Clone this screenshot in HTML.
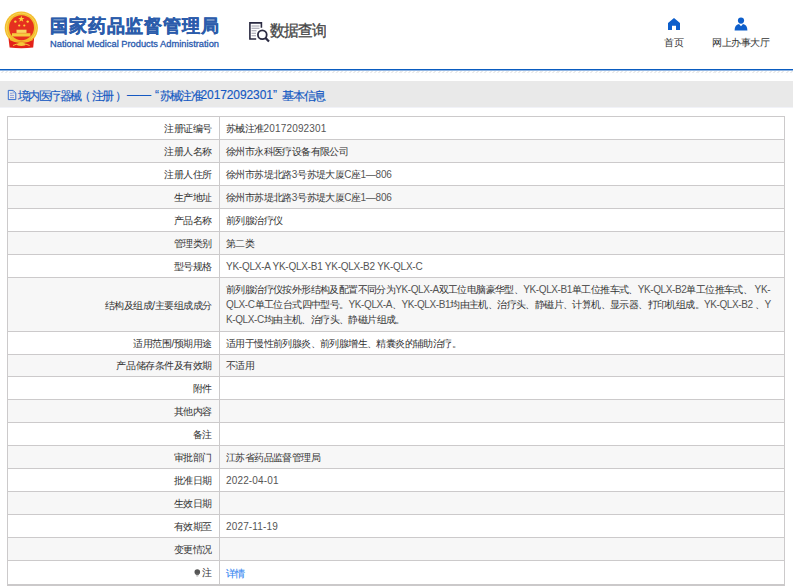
<!DOCTYPE html>
<html><head><meta charset="utf-8">
<style>
*{margin:0;padding:0;box-sizing:border-box}
html,body{width:793px;height:587px;overflow:hidden;background:#fff;font-family:"Liberation Sans",sans-serif}
.a{position:absolute;white-space:nowrap}
.t1{left:50px;top:14px;font-size:18px;font-weight:bold;-webkit-text-stroke:0.35px #2b5cab;color:#2b5cab;line-height:24px;letter-spacing:0.85px}
.t2{left:50px;top:38px;font-size:9.3px;color:#2a5aae;-webkit-text-stroke:0.3px #2a5aae;line-height:12px}
.sqt{left:270px;top:19px;font-size:15px;color:#474747;-webkit-text-stroke:0.3px #474747;line-height:22px;letter-spacing:-1.1px;transform:scaleY(1.08);transform-origin:0 0}
.nav{top:37px;font-size:10px;color:#333;line-height:12px;letter-spacing:-0.45px}
.line{left:0;top:69px;width:793px;height:1px;background:#0a5cc0}
.line2{left:0;top:70px;width:793px;height:1px;background:#8fb4e2}
.hatch{left:0;top:71px;width:793px;height:2px;background:repeating-linear-gradient(135deg,#fff 0,#fff 1.5px,#ececec 1.5px,#ececec 3px)}
.bar{left:0;top:81px;width:793px;height:26px;background:#e9e9e9}
.crumb{top:89px;font-size:12px;color:#1559c2;-webkit-text-stroke:0.15px #1559c2;line-height:14px}
.row{position:absolute;left:7px;width:778px;border-top:1px solid #cccacb;border-left:1px solid #cccacb;border-right:1px solid #cccacb}
.row.g{background:#f7f7f7}
.div{position:absolute;left:219px;top:116px;width:1px;height:469px;background:#cccacb}
.bot{position:absolute;left:7px;top:584px;width:778px;height:2px;background:#cbc9ca}
.k,.v{position:absolute;font-size:10px;color:#333;line-height:12px;white-space:nowrap}
.k{left:0;width:212px;text-align:right;letter-spacing:-0.45px}
.v{left:226px;font-size:10px;letter-spacing:-0.25px;color:#555}
.c{font-size:10px;letter-spacing:-0.6px;color:#333}
.dg{letter-spacing:0.15px}
.vc{font-size:10px;letter-spacing:-0.6px;color:#333}
a{color:#3888f2;-webkit-text-stroke:0.15px #3888f2;text-decoration:none}
</style></head><body>
<svg class="a" style="left:0;top:0" width="45" height="55" viewBox="0 0 45 55">
  <circle cx="21.3" cy="28" r="16.6" fill="#f3bd2c"/>
  <circle cx="21.3" cy="28" r="15" fill="none" stroke="#f8d45a" stroke-width="1"/>
  <circle cx="21.5" cy="27.7" r="12.5" fill="#e5301f"/>
  <path d="M21.3 15.8l0.8 2.3h2.4l-1.95 1.45 0.75 2.3-2-1.45-2 1.45 0.75-2.3-1.95-1.45h2.4z" fill="#ffd23a"/>
  <circle cx="15.3" cy="21.6" r="1.2" fill="#ffd23a"/>
  <circle cx="27.7" cy="21.6" r="1.2" fill="#ffd23a"/>
  <circle cx="19.2" cy="25.5" r="1.1" fill="#ffd23a"/>
  <circle cx="24.3" cy="25.5" r="1.1" fill="#ffd23a"/>
  <path d="M16.5 29.7h10v3.2h-10z" fill="#f9d660"/>
  <path d="M12 33.2h18.4v3.3h-18.4z" fill="#f6cc3e"/>
  <path d="M8.5 38.2 Q21.3 45 34.1 38.2 L33.2 47.6 Q21.3 49 9.6 47.6 Z" fill="#e32219"/>
  <path d="M10 39.2 Q21.3 45.5 32.6 39.2" fill="none" stroke="#f3bd2c" stroke-width="1.8"/>
  <ellipse cx="21.3" cy="44.3" rx="4.5" ry="1.6" fill="#f6c83a"/>
  <path d="M13 45.5 L17 44 M29.6 45.5 L25.6 44" stroke="#f6c83a" stroke-width="1"/>
</svg>
<div class="a t1">国家药品监督管理局</div>
<div class="a t2">National Medical Products Administration</div>
<svg class="a" style="left:247px;top:20px" width="24" height="24" viewBox="0 0 24 24">
  <path d="M14.4 7.8V2.9H2.9V19H9.2" fill="none" stroke="#2b2b42" stroke-width="1.6"/>
  <path d="M4.5 6h8M4.5 8.2h8M4.5 10.8h5M4.5 13.2h4.5M4.5 15.8h4.5" stroke="#9d9daa" stroke-width="1.1"/>
  <circle cx="15.3" cy="14.7" r="4.4" fill="none" stroke="#2b2b42" stroke-width="1.8"/>
  <path d="M18.4 17.9l3.6 3.6" stroke="#2b2b42" stroke-width="2.2"/>
</svg>
<div class="a sqt">数据查询</div>
<svg class="a" style="left:667px;top:17px" width="14" height="14" viewBox="0 0 14 14">
  <path d="M1 6 L7 1 L13 6 V13 H9 V8.7 H5 V13 H1 Z" fill="#0d5ecb"/>
</svg>
<div class="a nav" style="left:664px">首页</div>
<svg class="a" style="left:734px;top:17px" width="14" height="14" viewBox="0 0 14 14">
  <circle cx="7" cy="3.6" r="3.1" fill="#0d5ecb"/>
  <path d="M0.6 13.5 Q0.6 7.8 5 7 L7 9.2 L9 7 Q13.4 7.8 13.4 13.5 Z" fill="#0d5ecb"/>
</svg>
<div class="a nav" style="left:712px">网上办事大厅</div>
<div class="a line"></div>
<div class="a line2"></div>
<div class="a hatch"></div>
<div class="a bar"></div>
<div class="a" style="left:0;top:107px;width:793px;height:1px;background:#f1f2f8"></div>
<svg class="a" style="left:7px;top:89px" width="10" height="12" viewBox="0 0 10 12">
  <path d="M1.3 1.4H6.2L8.8 4V10.6H1.3Z" fill="none" stroke="#2b66cf" stroke-width="0.95"/>
  <path d="M6.2 1.4V4H8.8" fill="none" stroke="#7a9be0" stroke-width="0.7"/>
  <path d="M3 4.3h2.6M3 6.4h4M3 8.6h4" stroke="#7d8fd6" stroke-width="0.85"/>
</svg>
<div class="a crumb" style="left:17.5px;letter-spacing:-1.5px">境内医疗器械</div>
<div class="a crumb" style="left:78.5px">（</div>
<div class="a crumb" style="left:91.5px;letter-spacing:-1.5px">注册</div>
<div class="a crumb" style="left:115px">）</div>
<div class="a crumb" style="left:127px;top:88px">——</div>
<div class="a crumb" style="left:155px;top:88px">“</div>
<div class="a crumb" style="left:159.5px;letter-spacing:-1.6px">苏械注准</div>
<div class="a crumb" style="left:200.5px;top:88px;letter-spacing:-0.1px">20172092301</div>
<div class="a crumb" style="left:273px;top:88px">”</div>
<div class="a crumb" style="left:282px;letter-spacing:-1.2px">基本信息</div>

<div class="row" style="top:116px;height:23px"></div>
<div class="row g" style="top:139px;height:23px"></div>
<div class="row" style="top:162px;height:23px"></div>
<div class="row g" style="top:185px;height:23px"></div>
<div class="row" style="top:208px;height:23px"></div>
<div class="row g" style="top:231px;height:23px"></div>
<div class="row" style="top:254px;height:23px"></div>
<div class="row g" style="top:277px;height:54px"></div>
<div class="row" style="top:331px;height:23px"></div>
<div class="row g" style="top:354px;height:22px"></div>
<div class="row" style="top:376px;height:23px"></div>
<div class="row g" style="top:399px;height:23px"></div>
<div class="row" style="top:422px;height:23px"></div>
<div class="row g" style="top:445px;height:23px"></div>
<div class="row" style="top:468px;height:23px"></div>
<div class="row g" style="top:491px;height:23px"></div>
<div class="row" style="top:514px;height:23px"></div>
<div class="row g" style="top:537px;height:23px"></div>
<div class="row" style="top:560px;height:24px"></div>
<div class="div"></div>
<div class="bot"></div>

<div class="k" style="top:123px">注册证编号</div><div class="v" style="top:123px"><span class="c">苏械注准</span><span class="dg">20172092301</span></div>
<div class="k" style="top:146px">注册人名称</div><div class="v vc" style="top:146px">徐州市永科医疗设备有限公司</div>
<div class="k" style="top:169px">注册人住所</div><div class="v" style="top:169px"><span class="c">徐州市苏堤北路</span>3<span class="c">号苏堤大厦</span>C<span class="c">座</span>1—806</div>
<div class="k" style="top:192px">生产地址</div><div class="v" style="top:192px"><span class="c">徐州市苏堤北路</span>3<span class="c">号苏堤大厦</span>C<span class="c">座</span>1—806</div>
<div class="k" style="top:215px">产品名称</div><div class="v vc" style="top:215px">前列腺治疗仪</div>
<div class="k" style="top:238px">管理类别</div><div class="v vc" style="top:238px">第二类</div>
<div class="k" style="top:261px">型号规格</div><div class="v" style="top:261px">YK-QLX-A YK-QLX-B1 YK-QLX-B2 YK-QLX-C</div>
<div class="k" style="top:300px">结构及组成/主要组成成分</div>
<div class="v" style="top:282px;line-height:15px;letter-spacing:-0.4px"><span class="c">前列腺治疗仪按外形结构及配置不同分为</span>YK-QLX-A<span class="c">双工位电脑豪华型、</span>YK-QLX-B1<span class="c">单工位推车式、</span>YK-QLX-B2<span class="c">单工位推车式、</span> YK-<br>QLX-C<span class="c">单工位台式四中型号。</span>YK-QLX-A<span class="c">、</span>YK-QLX-B1<span class="c">均由主机、治疗头、静磁片、计算机、显示器、打印机组成。</span>YK-QLX-B2 <span class="c">、</span>Y<br>K-QLX-C<span class="c">均由主机、治疗头、静磁片组成。</span></div>
<div class="k" style="top:338px">适用范围/预期用途</div><div class="v vc" style="top:338px">适用于慢性前列腺炎、前列腺增生、精囊炎的辅助治疗。</div>
<div class="k" style="top:360px">产品储存条件及有效期</div><div class="v vc" style="top:360px">不适用</div>
<div class="k" style="top:383px">附件</div>
<div class="k" style="top:406px">其他内容</div>
<div class="k" style="top:429px">备注</div>
<div class="k" style="top:452px">审批部门</div><div class="v vc" style="top:452px">江苏省药品监督管理局</div>
<div class="k" style="top:475px">批准日期</div><div class="v" style="top:475px"><span class="dg">2022-04-01</span></div>
<div class="k" style="top:498px">生效日期</div>
<div class="k" style="top:521px">有效期至</div><div class="v" style="top:521px"><span class="dg">2027-11-19</span></div>
<div class="k" style="top:544px">变更情况</div>
<div class="k" style="top:567px">注</div>
<svg class="a" style="left:194px;top:569px" width="7" height="8" viewBox="0 0 7 8">
  <circle cx="3.3" cy="3" r="2.8" fill="#555"/>
  <path d="M1.1 4.6 L5.5 4.6 L4.3 6.3 L2.3 6.3 Z" fill="#6a6a6a"/>
  <path d="M2.4 6.5h1.8v1h-1.8z" fill="#b0b0b0"/>
</svg>
<div class="v vc" style="top:568px"><a>详情</a></div>
</body></html>
